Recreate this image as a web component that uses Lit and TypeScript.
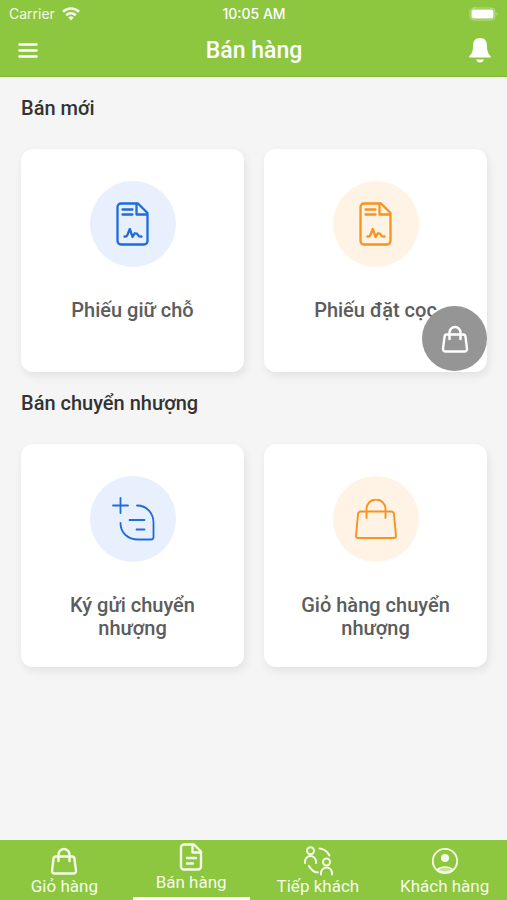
import { LitElement, html, css, svg } from "lit";
import { customElement, property } from "lit/decorators.js";
import { classMap } from "lit/directives/class-map.js";

const documentSign = svg`
  <path d="M5 1.500h17l9.500 9.500v28a3.500 3.500 0 0 1-3.500 3.500H5A3.500 3.500 0 0 1 1.500 39V5A3.500 3.500 0 0 1 5 1.500z"/>
  <path d="M20.500 2v10.500H31"/>
  <path d="M6.500 7.500h10M6.500 12.500h10"/>
  <path d="M8.500 34.500q2.500 .5 3.500-3l1.800-4.500 2.800 8 2-3.500q2.500-.5 3.400 1.500t3.500 1.500"/>`;

const bag = svg`
  <path d="M7 9.500h16a2.500 2.500 0 0 1 2.500 2.300l1.500 12a2.500 2.500 0 0 1-2.500 2.700h-19A2.500 2.500 0 0 1 3 23.800l1.500-12A2.500 2.500 0 0 1 7 9.500z"/>
  <path d="M9.500 14V7.500a5.500 5.500 0 0 1 11 0V14"/>`;

const icons = {
  document: html`<svg width="33" height="44" viewBox="0 0 33 44" stroke-width="2.300">${documentSign}</svg>`,
  consign: html`<svg width="44" height="44" viewBox="0 0 44 44" stroke-width="1.800">
    <path d="M2 8.500h15M9.500 1v15"/>
    <path d="M26 8.500c10 0 16.500 8 16.500 17.500V40a2.500 2.500 0 0 1-2.500 2.500H27C17 42.500 9.500 36 9.500 26"/>
    <path d="M18.500 23h15M25.500 32.500h8"/></svg>`,
  basket: html`<svg width="42" height="40" viewBox="0 0 42 40" stroke-width="1.900">
    <path d="M6 12.500h30a3 3 0 0 1 3 2.800l2 21.700a2 2 0 0 1-2 2H3a2 2 0 0 1-2-2l2-21.700A3 3 0 0 1 6 12.500z"/>
    <path d="M11.500 19V10a9.500 9.500 0 0 1 19 0v9"/></svg>`,
  bag: html`<svg width="30" height="28" viewBox="0 0 30 28" stroke-width="2.400">${bag}</svg>`,
  sheet: html`<svg width="24" height="28" viewBox="0 0 24 28" stroke-width="2.400">
    <path d="M5 1.500h10l7 7V23.500a3 3 0 0 1-3 3H5a3 3 0 0 1-3-3V4.500a3 3 0 0 1 3-3z"/>
    <path d="M13.500 2v7.500H22M8 15h9M8 20.500h6"/></svg>`,
  people: html`<svg width="30" height="30" viewBox="0 0 30 30" stroke-width="2">
    <circle cx="7.500" cy="4.800" r="3.500"/><path d="M2 17v-1.500a5.500 5.500 0 0 1 11 0V17"/>
    <circle cx="23.500" cy="16" r="3.500"/><path d="M18 28.500V27a5.500 5.500 0 0 1 11 0v1.500"/>
    <path d="M16.500 2.500q6.500.5 10 7M6 20q3 6 9 6.500"/></svg>`,
  person: html`<svg width="28" height="28" viewBox="0 0 28 28" stroke-width="1.800">
    <circle cx="14" cy="14" r="12.200"/><circle cx="14" cy="11" r="4" fill="currentColor" stroke="none"/>
    <path d="M6.500 22.500a9 6 0 0 1 15 0 12 12 0 0 1-15 0z" fill="currentColor" fill-opacity=".55" stroke-width="1.200"/></svg>`,
};

type IconName = keyof typeof icons;

const iconStyles = css`
  svg { display: block; fill: none; stroke: currentColor; stroke-linecap: round; stroke-linejoin: round; }
`;

@customElement("sale-card")
class SaleCard extends LitElement {
  @property() icon: IconName = "document";
  @property() label = "";
  @property() tone = "blue";

  static styles = [iconStyles, css`
    :host { display: block; }
    .card {
      box-sizing: border-box; width: 100%; aspect-ratio: 1; padding: 32px 28px 0; border: 0;
      border-radius: 12px; background: #fff; box-shadow: 2px 4px 10px rgba(0, 0, 0, .08);
      display: flex; flex-direction: column; align-items: center; gap: 32px;
      font: 500 20px/23px Roboto, sans-serif; color: #5c5c5c; cursor: pointer;
    }
    .disc { width: 86px; height: 86px; flex: none; border-radius: 50%; display: grid; place-items: center; }
    .blue { background: #e8f0fe; color: #1f6bdc; }
    .orange { background: #fff3e6; color: #f7931e; }
  `];

  render() {
    return html`<button class="card" type="button">
      <span class="disc ${this.tone}">${icons[this.icon]}</span>
      <span>${this.label}</span>
    </button>`;
  }
}

interface Tab { icon: IconName; label: string; active?: boolean }

@customElement("app-root")
class AppRoot extends LitElement {
  static styles = [iconStyles, css`
    :host {
      display: flex; flex-direction: column; min-height: 100vh; background: #f5f5f5;
      font-family: Roboto, sans-serif; color: #333;
    }
    header { background: #8dc63f; color: #fff; border-bottom: 1px solid #83b83c; }
    .status {
      height: 28px; padding: 0 8px 0 9px; display: grid; grid-template-columns: 1fr auto 1fr;
      align-items: center; font: 400 14px/20px Inter, sans-serif;
    }
    .carrier { display: flex; align-items: center; gap: 6px; color: #f4fae9; }
    .time { font-weight: 500; }
    .battery { justify-self: end; }
    .bar {
      height: 48px; padding: 0 14px 2px 15px; box-sizing: border-box;
      display: grid; grid-template-columns: 26px 1fr 26px; align-items: center;
    }
    h1 { margin: 0; text-align: center; font-size: 23px; line-height: 28px; font-weight: 500; }
    .bare { padding: 0; border: 0; background: none; color: inherit; display: grid; place-items: center; cursor: pointer; }
    main { flex: 1; padding: 0 20px 24px 21px; }
    h2 { margin: 0; padding: 19px 0 29px; font-size: 20px; line-height: 24px; font-weight: 500; }
    .cards { display: grid; grid-template-columns: 1fr 1fr; gap: 20px; }
    nav {
      position: sticky; bottom: 0; height: 60px; background: #8dc63f;
      display: grid; grid-template-columns: repeat(4, 1fr);
    }
    .tab {
      margin: 0 4px 0 6px; padding-top: 6px; box-sizing: border-box; color: #f6fbea; text-decoration: none;
      display: flex; flex-direction: column; align-items: center; white-space: nowrap;
      font-size: 17px; line-height: 20px;
    }
    .glyph { height: 30px; display: grid; place-items: center; }
    .active { padding-top: 2px; border-bottom: 3px solid #fff; }
    .fab {
      position: fixed; right: 20px; top: 306px; width: 65px; height: 65px; padding: 0; border: 0;
      border-radius: 50%; background: #959595; color: #fff; display: grid; place-items: center; cursor: pointer;
    }
  `];

  private tabs: Tab[] = [
    { icon: "bag", label: "Giỏ hàng" },
    { icon: "sheet", label: "Bán hàng", active: true },
    { icon: "people", label: "Tiếp khách" },
    { icon: "person", label: "Khách hàng" },
  ];

  render() {
    return html`
      <header>
        <div class="status">
          <span class="carrier">Carrier
            <svg width="20" height="14" viewBox="0 0 20 14" stroke-width="2.600">
              <path d="M2 4.800a11.500 11.500 0 0 1 16 0M5.200 8.200a7 7 0 0 1 9.600 0" stroke-linecap="butt"/>
              <path d="M10 13.500 7.200 10.600a4 4 0 0 1 5.600 0z" fill="currentColor" stroke="none"/>
            </svg>
          </span>
          <span class="time">10:05 AM</span>
          <svg class="battery" width="30" height="14" viewBox="0 0 30 14">
            <rect x="1" y="1" width="25" height="12" rx="4" stroke-opacity=".4"/>
            <rect x="2.500" y="2.500" width="22" height="9" rx="2" fill="currentColor" stroke="none"/>
            <path d="M27.500 5v4q2-2 0-4z" fill="currentColor" fill-opacity=".4" stroke="none"/>
          </svg>
        </div>
        <div class="bar">
          <button class="bare" type="button" aria-label="Menu">
            <svg width="22" height="18" viewBox="0 0 22 18" stroke-width="2.600"><path d="M2.500 2.500h17M2.500 8.500h17M2.500 14.500h17"/></svg>
          </button>
          <h1>Bán hàng</h1>
          <button class="bare" type="button" aria-label="Thông báo">
            <svg width="24" height="26" viewBox="0 0 24 26">
              <path d="M12 0c-5 0-7 3.500-7 8 0 6-1.500 8-3.500 10-.7.700-.4 1.500.5 1.500h20c.9 0 1.200-.8.500-1.500-2-2-3.500-4-3.500-10 0-4.500-2-8-7-8zM8 21.500h8q-1 3-4 3t-4-3z" fill="currentColor" stroke="none"/>
            </svg>
          </button>
        </div>
      </header>
      <main>
        <section>
          <h2>Bán mới</h2>
          <div class="cards">
            <sale-card icon="document" label="Phiếu giữ chỗ"></sale-card>
            <sale-card icon="document" label="Phiếu đặt cọc" tone="orange"></sale-card>
          </div>
        </section>
        <section>
          <h2>Bán chuyển nhượng</h2>
          <div class="cards">
            <sale-card icon="consign" label="Ký gửi chuyển nhượng"></sale-card>
            <sale-card icon="basket" label="Giỏ hàng chuyển nhượng" tone="orange"></sale-card>
          </div>
        </section>
      </main>
      <button class="fab" type="button" aria-label="Giỏ hàng">${icons.bag}</button>
      <nav>
        ${this.tabs.map((tab) => html`
          <a href="#" class=${classMap({ tab: true, active: !!tab.active })}>
            <span class="glyph">${icons[tab.icon]}</span>${tab.label}
          </a>`)}
      </nav>`;
  }
}
